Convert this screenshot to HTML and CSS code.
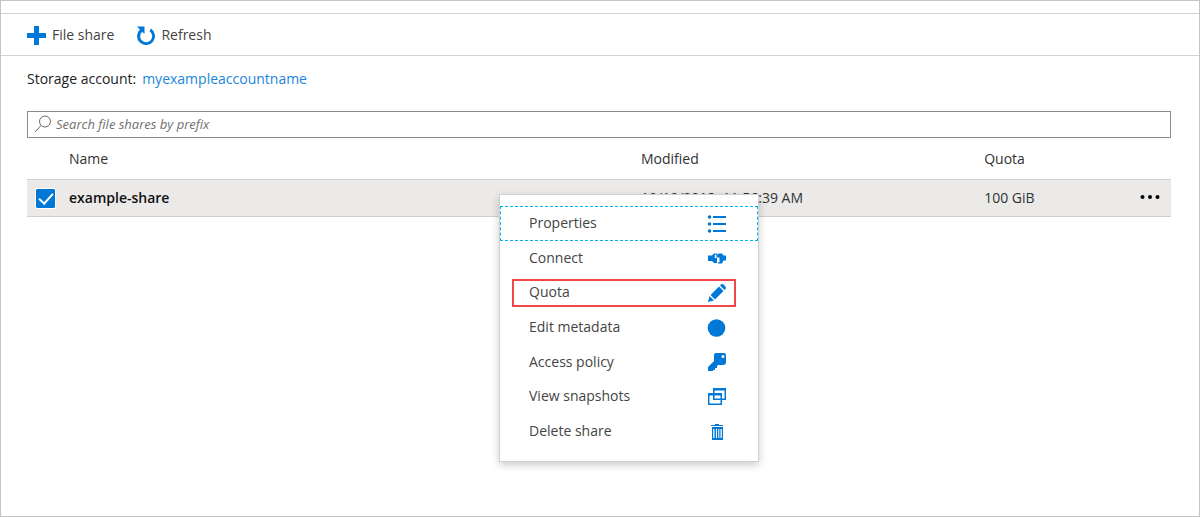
FILE: index.html
```html
<!DOCTYPE html>
<html lang="en">
<head>
<meta charset="utf-8">
<title>File shares</title>
<link rel="stylesheet" href="styles.css">
</head>
<body>
<div class="page">
  <header class="toolbar">
    <button class="tool" type="button">
      <svg class="tool-icon" viewBox="0 0 19 19" aria-hidden="true"><path d="M7 0h5v7h7v5h-7v7H7v-7H0V7h7z"/></svg>
      File share
    </button>
    <button class="tool" type="button">
      <svg class="tool-icon" viewBox="0 0 19 19" aria-hidden="true"><path d="M1 0.500h7.500V8L6.200 5.700A6 6 0 1 0 13.500 5.200L15 2.600A9 9 0 1 1 3.900 3.400z"/></svg>
      Refresh
    </button>
  </header>
  <main class="content">
    <p class="account">Storage account: <a class="link" href="#account">myexampleaccountname</a></p>
    <label class="search">
      <svg class="search-icon" viewBox="0 0 18 18" aria-hidden="true"><circle cx="11" cy="6.500" r="5.500"/><path d="M7 10.500L1 17"/></svg>
      <input class="search-input" type="text" placeholder="Search file shares by prefix" aria-label="Search file shares by prefix">
    </label>
    <div class="list">
      <table class="shares">
        <thead>
          <tr><th class="col-check"></th><th class="col-name">Name</th><th class="col-modified">Modified</th><th class="col-quota">Quota</th><th class="col-more"></th></tr>
        </thead>
        <tbody>
          <tr class="selected">
            <td class="col-check"><input class="check" type="checkbox" checked aria-label="Select example-share"></td>
            <td class="share-name">example-share</td>
            <td>10/19/2018, 11:56:39 AM</td>
            <td>100 GiB</td>
            <td class="col-more"><button class="more" type="button" aria-label="More actions"><svg class="more-icon" viewBox="0 0 20 4" aria-hidden="true"><circle cx="2.500" cy="2" r="2"/><circle cx="10" cy="2" r="2"/><circle cx="17.500" cy="2" r="2"/></svg></button></td>
          </tr>
        </tbody>
      </table>
      <div class="menu" role="menu">
        <button class="item focused" type="button" role="menuitem">Properties
          <svg class="icon" viewBox="0 0 20 20" aria-hidden="true"><circle cx="2.500" cy="4" r="1.800"/><circle cx="2.500" cy="11" r="1.800"/><circle cx="2.500" cy="18" r="1.800"/><path d="M6 3h13v2H6zM6 10h13v2H6zM6 17h13v2H6z"/></svg>
        </button>
        <button class="item" type="button" role="menuitem">Connect
          <svg class="icon" viewBox="0 0 20 20" aria-hidden="true"><path d="M1 7.500h4l2-2h3v1.200H7.800V10H10v5H7l-2-2H1zM11 5.500h4l1.500 2H19v5h-2.500l-1.500 3h-4v-1.200h1.500V9.500H9.500V6.500H11z"/></svg>
        </button>
        <button class="item" type="button" role="menuitem">Quota
          <svg class="icon" viewBox="0 0 20 20" aria-hidden="true"><path d="M1 20l1.500-6 4.500 4.500zM3.500 13L12 4.500l4.500 4.500L8 17.500zM13 3.500l1-1q1.500-1 3 .5l1 1q1.500 1.500.5 3l-1 1z"/></svg>
          <span class="callout"></span>
        </button>
        <button class="item" type="button" role="menuitem">Edit metadata
          <svg class="icon" viewBox="0 0 20 20" aria-hidden="true"><circle cx="9.500" cy="11" r="8.800"/></svg>
        </button>
        <button class="item" type="button" role="menuitem">Access policy
          <svg class="icon" viewBox="0 0 20 20" aria-hidden="true"><path fill-rule="evenodd" d="M9 1h8q2 0 2 2v7q0 3-3 3h-5l-1 1v2H8v2H6v1H1v-4l6-6V3q0-2 2-2zM16 3a1.500 1.500 0 1 0 0 3a1.500 1.500 0 1 0 0-3z"/></svg>
        </button>
        <button class="item" type="button" role="menuitem">View snapshots
          <svg class="icon" viewBox="0 0 20 20" aria-hidden="true"><path fill-rule="evenodd" d="M6 2h13v12H6zM7.500 4.500v8h10v-8z"/><path fill-rule="evenodd" d="M1 7h14v12H1zM2.500 9.500v8h11v-8z"/></svg>
        </button>
        <button class="item" type="button" role="menuitem">Delete share
          <svg class="icon" viewBox="0 0 20 20" aria-hidden="true"><path fill-rule="evenodd" d="M8 3h4v1h4v1H4V4h4zM5 6h11v13H5zM6.200 8v9h1.300V8zM9 8v9h1V8zM11.300 8v9h1V8zM13.500 8v9h1.300V8z"/></svg>
        </button>
      </div>
    </div>
  </main>
</div>
</body>
</html>
```
FILE: styles.css
```css
* { box-sizing: border-box; }
body {
  margin: 0;
  font: 14px/20px "Open Sans", "Noto Sans", sans-serif;
  color: #323232;
  background: #fff;
}
button { font: inherit; color: inherit; background: none; border: 0; padding: 0; cursor: pointer; }
.page { min-height: 100vh; border: 1px solid #c4c4c4; padding-top: 12px; }
.toolbar {
  display: flex;
  align-items: center;
  gap: 22px;
  height: 43px;
  padding: 1px 26px 0;
  border-top: 1px solid #d2d2d2;
  border-bottom: 1px solid #d2d2d2;
}
.tool { display: flex; align-items: center; gap: 6px; color: #444; }
.tool-icon { width: 19px; height: 19px; fill: #0078d7; }
.content { padding: 13px 28px 0 26px; }
.account { display: flex; gap: 6px; margin: 0 0 22px; color: #222; }
.link { color: #1a86d9; text-decoration: none; }
.search {
  display: flex;
  align-items: center;
  gap: 4px;
  height: 27px;
  padding: 0 6px 1px;
  border: 1px solid #8c8c8c;
}
.search-icon { width: 18px; height: 18px; fill: none; stroke: #666; stroke-width: 1; }
.search-input { flex: 1; font: italic 13px/20px "Open Sans", "Noto Sans", sans-serif; border: 0; outline: 0; padding: 0; background: none; }
.search-input::placeholder { color: #707070; opacity: 1; }
.list { position: relative; }
.shares { width: 100%; table-layout: fixed; border-collapse: separate; border-spacing: 0; }
.shares th, .shares td { padding: 0; text-align: left; font-weight: 400; }
.shares th { height: 41px; }
.shares td {
  height: 38px;
  background: #ebeae9;
  border-top: 1px solid #cfcfcf;
  border-bottom: 1px solid #cfcfcf;
}
.shares .col-check { width: 42px; }
.shares td.col-check { padding-left: 9px; }
.shares .share-name { font-weight: 600; color: #111; }
.col-name { width: 50%; }
.col-modified { width: 30%; }
.shares td.col-more { text-align: right; padding: 0 11px 4px 0; }
.check {
  appearance: none;
  display: block;
  width: 19px;
  height: 19px;
  margin: 0;
  border-radius: 1px;
  background: #0078d7;
  outline: 1px solid #fff;
}
.check::before {
  content: "";
  display: block;
  width: 6px;
  height: 12px;
  margin: 1px 0 0 6px;
  border: solid #fff;
  border-width: 0 2px 2px 0;
  transform: rotate(42deg);
}
.more { display: inline-flex; height: 20px; align-items: center; vertical-align: middle; }
.more-icon { width: 20px; height: 4px; fill: #000; }
.menu {
  position: absolute;
  top: 56px;
  left: 472px;
  display: grid;
  grid-template-rows: repeat(7, 1fr);
  width: 260px;
  height: 268px;
  padding: 11px 0 13px;
  background: #fff;
  border: 1px solid #d0d0d0;
  box-shadow: 0 3px 8px rgba(0, 0, 0, .2);
}
.item {
  position: relative;
  display: flex;
  align-items: center;
  justify-content: space-between;
  padding: 0 31px 0 29px;
  color: #444;
}
.focused { border: 1px dashed #00b4f0; padding: 0 30px 0 28px; }
.icon { width: 20px; height: 20px; fill: #0078d7; }
.callout { position: absolute; inset: 4px 22px 3px 12px; border: 2px solid #f04848; }
```
